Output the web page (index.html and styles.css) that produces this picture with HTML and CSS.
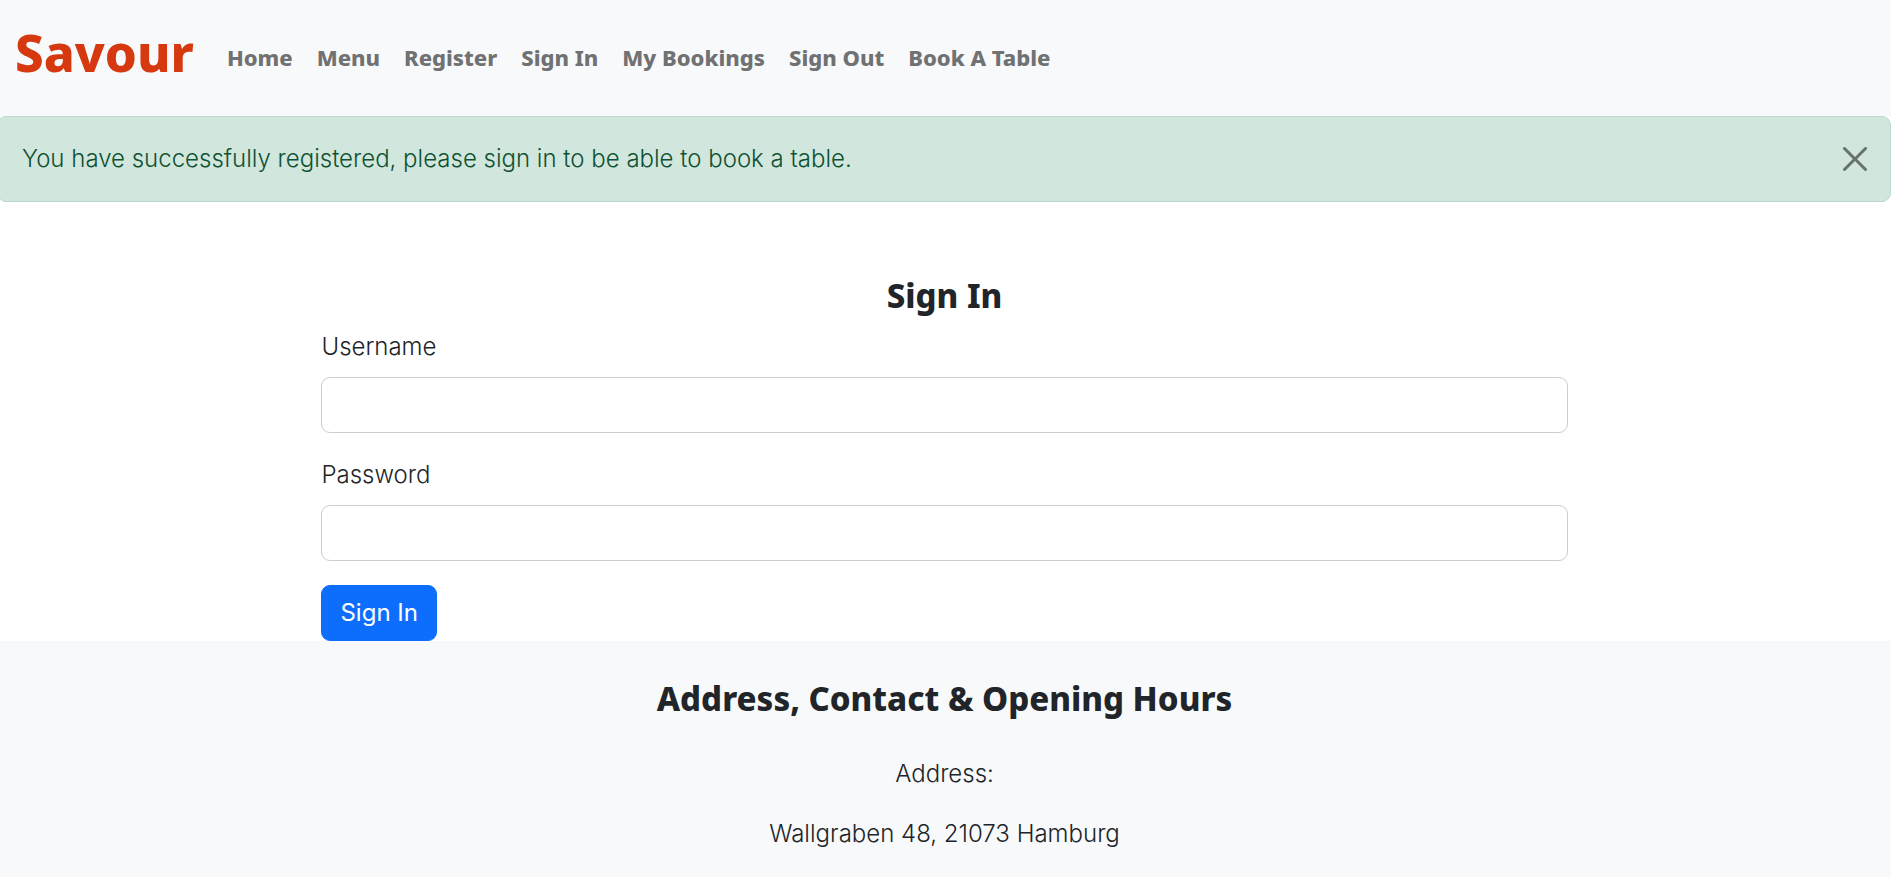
FILE: index.html
```html
<!DOCTYPE html>
<html lang="en">
<head>
<meta charset="utf-8">
<meta name="viewport" content="width=device-width, initial-scale=1">
<title>Savour - Sign In</title>
<link rel="stylesheet" href="styles.css">
</head>
<body>
<header class="navbar">
  <a class="brand" href="#">Savour</a>
  <nav class="nav">
    <a class="nav-link" href="#">Home</a>
    <a class="nav-link" href="#">Menu</a>
    <a class="nav-link" href="#">Register</a>
    <a class="nav-link" href="#">Sign In</a>
    <a class="nav-link" href="#">My Bookings</a>
    <a class="nav-link" href="#">Sign Out</a>
    <a class="nav-link" href="#">Book A Table</a>
  </nav>
</header>
<div class="alert" role="alert">
  <span>You have successfully registered, please sign in to be able to book a table.</span>
  <button class="close" type="button" aria-label="Close">
    <svg class="close-icon" viewBox="0 0 16 16" aria-hidden="true"><path d="M.293.293a1 1 0 0 1 1.414 0L8 6.586 14.293.293a1 1 0 1 1 1.414 1.414L9.414 8l6.293 6.293a1 1 0 0 1-1.414 1.414L8 9.414l-6.293 6.293a1 1 0 0 1-1.414-1.414L6.586 8 .293 1.707a1 1 0 0 1 0-1.414z"/></svg>
  </button>
</div>
<main class="content">
  <h1 class="heading">Sign In</h1>
  <form class="form">
    <div class="field">
      <label class="label" for="username">Username</label>
      <input class="input" id="username" name="username" type="text">
    </div>
    <div class="field">
      <label class="label" for="password">Password</label>
      <input class="input" id="password" name="password" type="password">
    </div>
    <button class="button" type="submit">Sign In</button>
  </form>
</main>
<footer class="footer">
  <h2 class="heading">Address, Contact &amp; Opening Hours</h2>
  <p class="line">Address:</p>
  <p class="line">Wallgraben 48, 21073 Hamburg</p>
</footer>
</body>
</html>
```
FILE: styles.css
```css
* {
  box-sizing: border-box;
}

body {
  display: flex;
  flex-direction: column;
  min-height: 100vh;
  margin: 0;
  background: #fff;
  color: #212529;
  font-family: Inter, "Liberation Sans", sans-serif;
  font-size: 24px;
  font-weight: 300;
  line-height: 36px;
}

.navbar {
  display: flex;
  align-items: center;
  gap: 21px;
  padding: 14px 15px 26px;
  background: #f8f9fa;
  font-family: "Noto Sans", "Open Sans", sans-serif;
  font-weight: 800;
}

.brand {
  color: #d63910;
  font-size: 51px;
  line-height: 76px;
  text-decoration: none;
}

.nav {
  display: flex;
  flex-wrap: wrap;
}

.nav-link {
  padding: 10px 12px 0;
  color: #707172;
  font-size: 22px;
  text-decoration: none;
}

.alert {
  display: flex;
  align-items: center;
  justify-content: space-between;
  margin-left: -3px;
  padding: 24px 23px 24px 24px;
  border: 1px solid #badbcc;
  border-radius: 9px;
  background: #d1e7dd;
  color: #0f5132;
}

.close {
  display: flex;
  padding: 0;
  border: 0;
  background: none;
  opacity: 0.5;
  cursor: pointer;
}

.close-icon {
  width: 24px;
  height: 24px;
}

.content {
  width: 66%;
  margin: 0 auto;
  padding: 74px 2px 0 0;
}

.heading {
  margin: 0;
  font-family: "Noto Sans", "Open Sans", sans-serif;
  font-size: 33px;
  font-weight: 800;
  line-height: 40px;
  text-align: center;
}

.form {
  padding-top: 13px;
}

.field {
  display: flex;
  flex-direction: column;
  gap: 12px;
  margin-bottom: 24px;
}

.input {
  width: 100%;
  height: 56px;
  padding: 9px 18px;
  border: 1px solid #c8cdd4;
  border-radius: 9px;
  background: #fff;
  color: inherit;
  font: inherit;
}

.button {
  display: block;
  padding: 9px 18px;
  border: 1px solid #0d6efd;
  border-radius: 9px;
  background: #0d6efd;
  color: #fff;
  font: inherit;
  font-weight: 400;
  cursor: pointer;
}

.footer {
  flex: 1 0 auto;
  padding: 38px 26px 24px 24px;
  background: #f8f9fa;
  text-align: center;
}

.line {
  margin: 24px 0 0;
}

.heading + .line {
  margin-top: 37px;
}
```
